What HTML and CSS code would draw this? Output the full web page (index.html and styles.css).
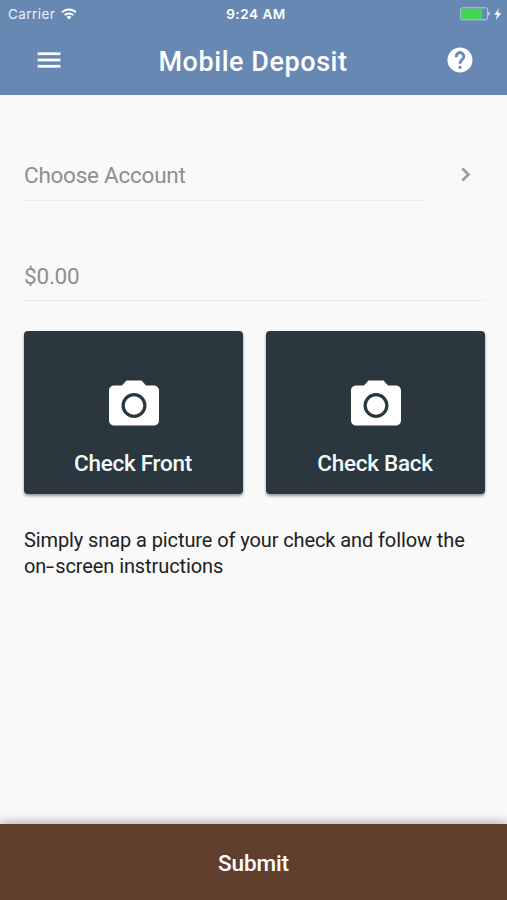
FILE: index.html
```html
<!DOCTYPE html>
<html lang="en">
<head>
<meta charset="utf-8">
<title>Mobile Deposit</title>
<link rel="stylesheet" href="styles.css">
</head>
<body>
<div class="app">
  <header class="header">
    <div class="status">
      <div class="carrier"><span>Carrier</span>
        <svg class="wifi" viewBox="0 0 16 12"><g fill="none" stroke="#fff" stroke-width="1.9"><path d="M1 4.400a10 10 0 0 1 14 0"/><path d="M3.700 7.200a6.100 6.100 0 0 1 8.600 0"/></g><path fill="#fff" d="M5.500 9a3.500 3.500 0 0 1 5 0L8 11.600z"/></svg>
      </div>
      <div class="clock">9:24 AM</div>
      <div class="power">
        <svg viewBox="0 0 42 14" width="42" height="14"><rect x=".6" y=".8" width="27" height="12" rx="1.8" fill="none" stroke="#b9cbe0"/><rect x="1.5" y="1.700" width="20.700" height="10.200" rx="1" fill="#42d651"/><path d="M28.400 4.800q3 2 0 4z" fill="#dce6f2"/><path d="M39 1.500 34.200 7.700h2.900L35.800 12.700l5.600-6.700h-3.400z" fill="#fff"/></svg>
      </div>
    </div>
    <div class="toolbar">
      <svg class="icon menu" viewBox="0 0 24 24"><path d="M3 18h18v-2H3v2zm0-5h18v-2H3v2zm0-7v2h18V6H3z"/></svg>
      <h1 class="title">Mobile Deposit</h1>
      <svg class="icon help" viewBox="0 0 24 24"><circle cx="12" cy="12" r="10"/><path d="M9 9.800V9a3 3 0 1 1 5.200 2.100L13 12.400c-.7.7-1 1.300-1 2.600M12 16.800v2.200"/></svg>
    </div>
  </header>
  <main class="content">
    <div class="row">
      <div class="field account">Choose Account</div>
      <svg class="chevron" viewBox="0 0 24 24"><path d="M10 6L8.590 7.410 13.170 12l-4.580 4.590L10 18l6-6z"/></svg>
    </div>
    <div class="field amount">$0.00</div>
    <div class="cards">
      <div class="card">
        <svg class="camera" viewBox="0 0 24 24"><path fill-rule="evenodd" d="M9 3 7.170 5H4c-1.100 0-2 .9-2 2v12c0 1.100.9 2 2 2h16c1.100 0 2-.9 2-2V7c0-1.100-.9-2-2-2h-3.170L15 3zM12 18a5 5 0 1 1 0-10 5 5 0 0 1 0 10z"/><circle cx="12" cy="13" r="3.700"/></svg>
        <span class="label">Check Front</span>
      </div>
      <div class="card">
        <svg class="camera" viewBox="0 0 24 24"><path fill-rule="evenodd" d="M9 3 7.170 5H4c-1.100 0-2 .9-2 2v12c0 1.100.9 2 2 2h16c1.100 0 2-.9 2-2V7c0-1.100-.9-2-2-2h-3.170L15 3zM12 18a5 5 0 1 1 0-10 5 5 0 0 1 0 10z"/><circle cx="12" cy="13" r="3.700"/></svg>
        <span class="label">Check Back</span>
      </div>
    </div>
    <p class="hint">Simply snap a picture of your check and follow the<br>on<span class="hyphen">-</span>screen instructions</p>
  </main>
  <footer class="submit">Submit</footer>
</div>
</body>
</html>
```
FILE: styles.css
```css
* { box-sizing: border-box; }
body { margin: 0; font-family: Roboto, sans-serif; background: #f9f9f9; }
.app { width: 507px; height: 900px; display: flex; flex-direction: column; overflow: hidden; }
.header { height: 95px; background: #6888b4; color: #fff; }
.status { height: 27px; padding: 0 5px 0 8px; display: grid; grid-template-columns: 1fr auto 1fr; align-items: center; font: 13.5px/28px Inter, sans-serif; }
.carrier { display: flex; align-items: center; gap: 6px; letter-spacing: .45px; color: #e9eff7; }
.wifi { width: 16px; height: 12px; }
.clock { padding-left: 2px; font-weight: 600; font-size: 13.5px; letter-spacing: .55px; }
.power { display: flex; justify-content: flex-end; }
.toolbar { height: 66px; padding: 0 32px 0 34px; display: flex; align-items: center; justify-content: space-between; }
.icon { width: 30px; height: 30px; fill: #fff; }
.menu { stroke: #fff; stroke-width: .2; }
.help path { fill: none; stroke: #6888b4; stroke-width: 2.300; }
.title { margin: 4px 3px 0 0; font-size: 27px; font-weight: 500; line-height: 32px; letter-spacing: .55px; }
.content { flex: 1; padding: 55px 22px 0 24px; }
.row { display: flex; justify-content: space-between; }
.field { height: 51px; border-bottom: 1px solid #ececec; color: #8f8f8f; font-size: 22.5px; line-height: 51px; }
.account { width: 400px; letter-spacing: -.25px; }
.chevron { width: 27px; height: 27px; margin: 11px 6px 0 0; fill: #999; stroke: #999; stroke-width: .4; }
.amount { margin-top: 49px; letter-spacing: -.2px; line-height: 52px; }
.cards { display: grid; grid-template-columns: 1fr 1fr; gap: 23px; margin-top: 30px; }
.card { height: 163px; padding-top: 42px; border-radius: 4px; background: #2b373e; box-shadow: 0 2px 3px rgba(0,0,0,.4); display: flex; flex-direction: column; align-items: center; }
.camera { width: 60px; height: 60px; fill: #fff; }
.label { margin-top: 16px; padding-right: 1px; color: #f3fafd; font-size: 22.5px; font-weight: 500; line-height: 28px; letter-spacing: -.27px; }
.hint { margin: 33px 0 0; color: #212121; font-size: 20px; line-height: 26px; letter-spacing: -.1px; white-space: nowrap; }
.hyphen { display: inline-block; width: 9px; transform: scaleX(1.45); transform-origin: left; }
.submit { height: 76px; background: #613f2d; color: #fff; box-shadow: 0 -2px 10px rgba(0,0,0,.3); font-size: 22.5px; font-weight: 500; line-height: 78px; letter-spacing: -.1px; text-align: center; }
```
